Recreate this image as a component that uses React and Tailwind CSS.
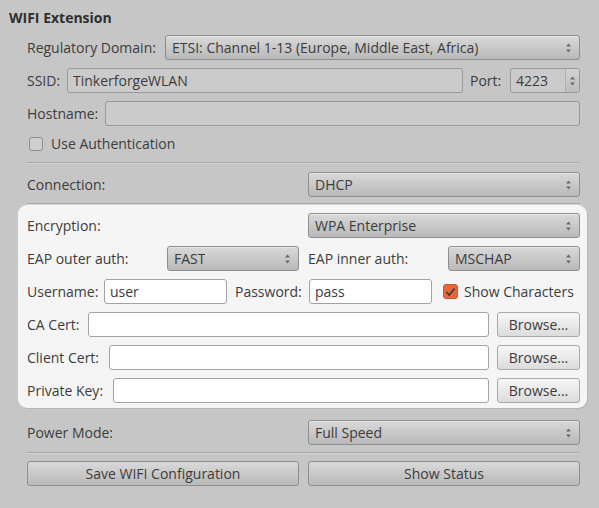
import React from "react";

const Arrows = () => (
  <svg width="7" height="12" viewBox="0 0 7 12" className="shrink-0">
    <path d="M3.5 1.5 L6 4.5 L1 4.5 Z" fill="#6a6a6a" />
    <path d="M3.5 10.5 L6 7.5 L1 7.5 Z" fill="#6a6a6a" />
  </svg>
);

const Combo = ({ value, className = "" }) => (
  <div
    className={`h-[25px] flex items-center justify-between pl-[6px] pr-[7px] rounded-[3px] border border-[#8e8e8e] bg-gradient-to-b from-[#d9d9d9] to-[#b9b9b9] shadow-[inset_0_1px_0_rgba(255,255,255,0.35)] ${className}`}
  >
    <span className="truncate leading-[18px]">{value}</span>
    <Arrows />
  </div>
);

const LineEdit = ({ value = "", light, className = "" }) => (
  <div
    className={`h-[25px] shrink-0 flex items-center px-[5px] rounded-[3px] border ${
      light ? "bg-white border-[#a3a3a3]" : "bg-[#cbcbcb] border-[#999999]"
    } ${className}`}
  >
    {value}
  </div>
);

const Button = ({ children, light, className = "" }) => (
  <div
    className={`h-[25px] flex items-center justify-center rounded-[3px] border ${
      light
        ? "border-[#a9a9a9] bg-gradient-to-b from-[#f7f7f7] to-[#dcdcdc]"
        : "border-[#8e8e8e] bg-gradient-to-b from-[#d9d9d9] to-[#b9b9b9]"
    } ${className}`}
  >
    {children}
  </div>
);

const Separator = () => <div className="h-px bg-[#a9a9a9] border-b border-[#d4d4d4] box-content" />;

export default function App() {
  return (
    <div
      className="w-[599px] h-[508px] bg-[#c6c6c6] text-[#3c3c3c] text-[14px] leading-[18px] overflow-hidden"
      style={{ fontFamily: "'Open Sans', 'DejaVu Sans', sans-serif" }}
    >
      <div className="pt-[9px] pl-[9px] h-[35px] font-bold text-[#2f2f2f]">WIFI Extension</div>

      <div className="pl-[27px] pr-[19px] flex flex-col">
        {/* Regulatory domain */}
        <div className="flex items-center gap-[8px]">
          <span className="w-[130px] shrink-0">Regulatory Domain:</span>
          <Combo value="ETSI: Channel 1-13 (Europe, Middle East, Africa)" className="flex-1 min-w-0" />
        </div>

        {/* SSID + Port */}
        <div className="flex items-center mt-[8px]">
          <span className="w-[40px] shrink-0">SSID:</span>
          <LineEdit value="TinkerforgeWLAN" className="flex-1 shrink" />
          <span className="ml-[7px] w-[40px] shrink-0">Port:</span>
          <div className="h-[25px] w-[70px] shrink-0 flex rounded-[3px] border border-[#999999] bg-[#cbcbcb] overflow-hidden">
            <span className="flex-1 flex items-center pl-[5px]">4223</span>
            <div className="w-[14px] flex items-center justify-center bg-gradient-to-b from-[#d2d2d2] to-[#bdbdbd] border-l border-[#b0b0b0]">
              <Arrows />
            </div>
          </div>
        </div>

        {/* Hostname */}
        <div className="flex items-center mt-[8px]">
          <span className="w-[78px] shrink-0">Hostname:</span>
          <LineEdit className="flex-1 shrink" />
        </div>

        {/* Use Authentication */}
        <div className="flex items-center mt-[10px] h-[16px] pl-[2px]">
          <div className="w-[14px] h-[14px] rounded-[3px] border border-[#8f8f8f] bg-[#cfcfcf]" />
          <span className="ml-[8px]">Use Authentication</span>
        </div>

        <div className="mt-[10px]">
          <Separator />
        </div>

        {/* Connection */}
        <div className="flex items-center mt-[8px]">
          <span className="w-[281px] shrink-0">Connection:</span>
          <Combo value="DHCP" className="flex-1 min-w-0" />
        </div>

        <div className="mt-[6px]">
          <Separator />
        </div>
      </div>

      {/* Enterprise panel */}
      <div className="mr-[12px] ml-[18px] h-[203px] rounded-[9px] bg-[#f5f5f5] shadow-[1px_1px_0_#b5b5b5] pl-[9px] pr-[7px] pt-[8px] flex flex-col gap-[8px]">
        <div className="flex items-center">
          <span className="w-[281px] shrink-0">Encryption:</span>
          <Combo value="WPA Enterprise" className="flex-1 min-w-0" />
        </div>

        <div className="flex items-center">
          <span className="w-[140px] shrink-0">EAP outer auth:</span>
          <Combo value="FAST" className="w-[132px] shrink-0" />
          <span className="ml-[9px] w-[140px] shrink-0">EAP inner auth:</span>
          <Combo value="MSCHAP" className="flex-1 min-w-0" />
        </div>

        <div className="flex items-center whitespace-nowrap">
          <span className="w-[77px] shrink-0">Username:</span>
          <LineEdit light value="user" className="w-[123px]" />
          <span className="ml-[8px] w-[74px] shrink-0">Password:</span>
          <LineEdit light value="pass" className="w-[123px]" />
          <div className="ml-[11px] shrink-0 w-[15px] h-[15px] rounded-[3px] bg-[#e5683a] border border-[#c75a31] flex items-center justify-center">
            <svg width="11" height="10" viewBox="0 0 11 10">
              <path d="M1.5 5 L4.2 8 L9.5 1.5" fill="none" stroke="#4b3b35" strokeWidth="1.8" />
            </svg>
          </div>
          <span className="ml-[6px]">Show Characters</span>
        </div>

        <div className="flex items-center">
          <span className="w-[61px] shrink-0">CA Cert:</span>
          <LineEdit light className="flex-1 shrink" />
          <Button light className="ml-[8px] w-[83px] shrink-0">Browse...</Button>
        </div>

        <div className="flex items-center">
          <span className="w-[82px] shrink-0">Client Cert:</span>
          <LineEdit light className="flex-1 shrink" />
          <Button light className="ml-[8px] w-[83px] shrink-0">Browse...</Button>
        </div>

        <div className="flex items-center">
          <span className="w-[86px] shrink-0">Private Key:</span>
          <LineEdit light className="flex-1 shrink" />
          <Button light className="ml-[8px] w-[83px] shrink-0">Browse...</Button>
        </div>
      </div>

      <div className="pl-[27px] pr-[19px] flex flex-col">
        {/* Power mode */}
        <div className="flex items-center mt-[12px]">
          <span className="w-[281px] shrink-0">Power Mode:</span>
          <Combo value="Full Speed" className="flex-1 min-w-0" />
        </div>

        <div className="mt-[7px]">
          <Separator />
        </div>

        <div className="flex gap-[9px] mt-[7px]">
          <Button className="flex-1">Save WIFI Configuration</Button>
          <Button className="flex-1">Show Status</Button>
        </div>
      </div>
    </div>
  );
}
